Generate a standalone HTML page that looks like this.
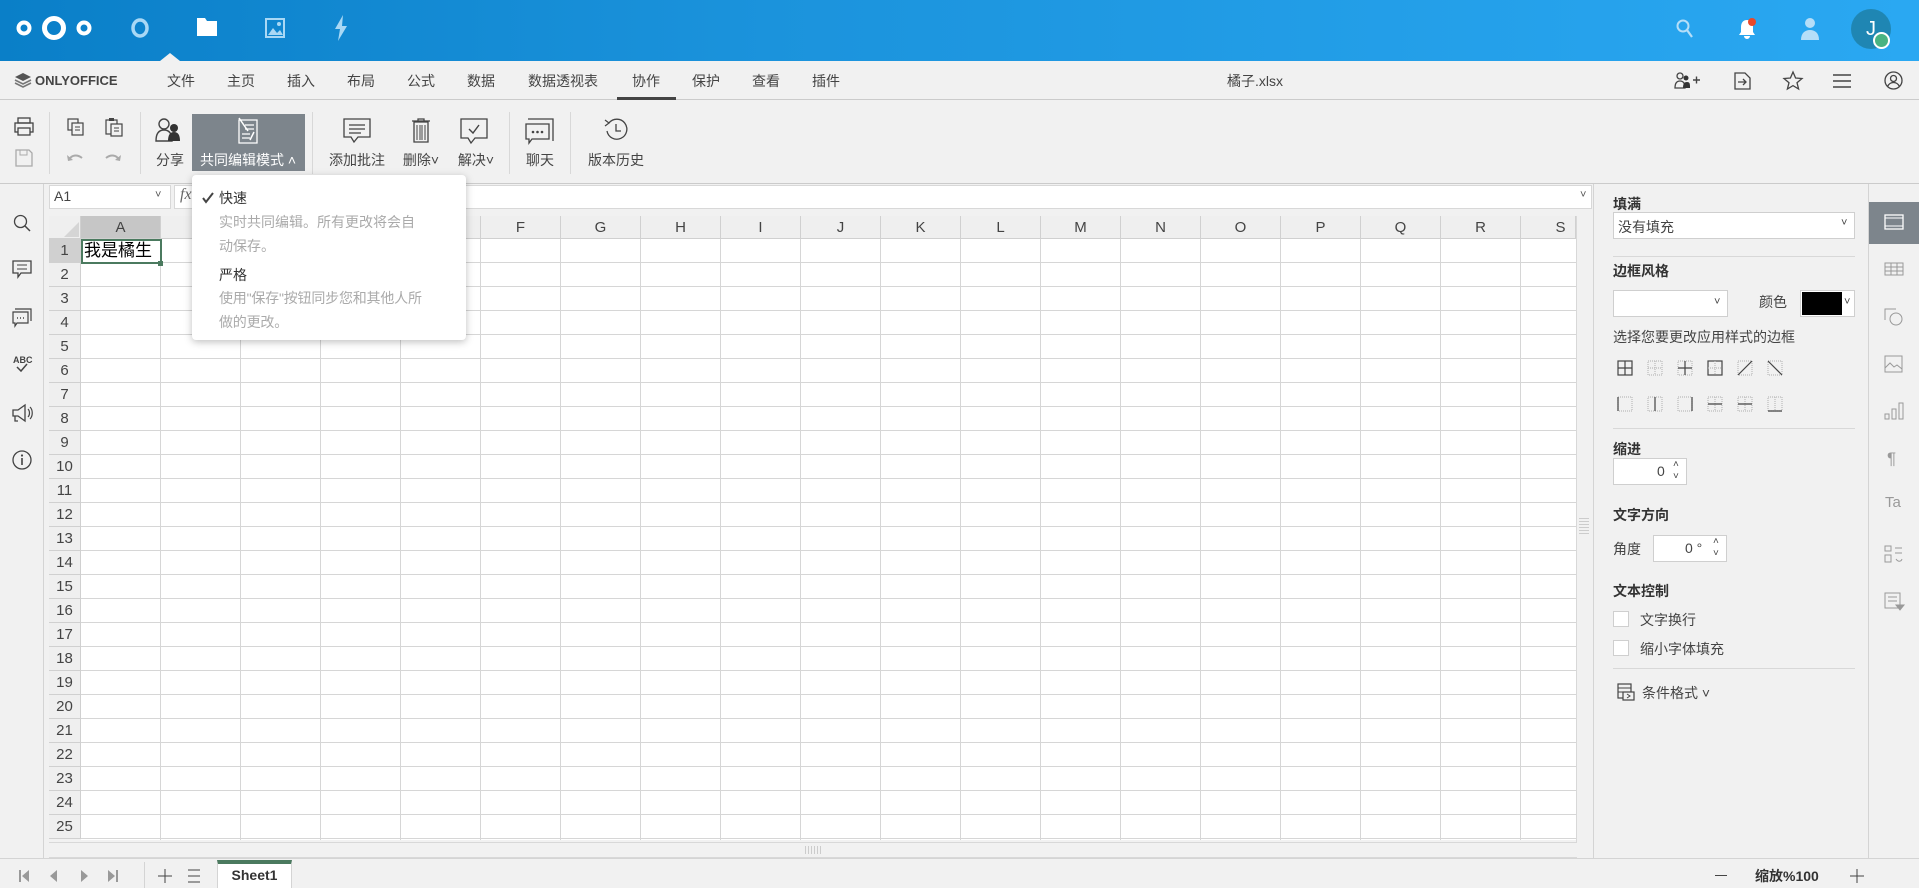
<!DOCTYPE html>
<html><head><meta charset="utf-8">
<style>
*{box-sizing:border-box;margin:0;padding:0}
body{width:1919px;height:888px;overflow:hidden;position:relative;background:#f1f1f1;font-family:"Liberation Sans","Noto Sans CJK SC",sans-serif;color:#444;font-size:14px}
.a{position:absolute}
.top{left:0;top:0;width:1919px;height:61px;background:linear-gradient(90deg,#0a7fc8 0%,#1b93dc 40%,#2aa8f2 100%)}
.menu{left:0;top:61px;width:1919px;height:39px;background:#f1f1f1;border-bottom:1px solid #cbcbcb}
.mt{top:71px;font-size:14px;color:#444;transform:translateX(-50%)}
.lbl{font-size:14px;color:#444;transform:translateX(-50%);top:150px;white-space:nowrap}
.sep{width:1px;background:#d8d8d8;top:112px;height:62px}
svg{position:absolute;overflow:visible}
.grid{left:81px;top:239px;width:1495px;height:601px;background-color:#fff;
background-image:repeating-linear-gradient(90deg,transparent 0 79px,#d6d6d6 79px 80px),repeating-linear-gradient(180deg,transparent 0 23px,#d6d6d6 23px 24px)}
.ch{top:216px;height:23px;width:80px;text-align:center;font-size:15px;line-height:23px;color:#444;background:#efefef;border-right:1px solid #d0d0d0;border-bottom:1px solid #d0d0d0}
.rh{left:49px;width:32px;height:24px;text-align:center;font-size:15px;line-height:24px;color:#444;background:#efefef;border-bottom:1px solid #d0d0d0;border-right:1px solid #d0d0d0}
.rp{font-size:14px;color:#444}
.b{font-weight:bold;color:#333}
.box{background:#fff;border:1px solid #cfcfcf}
</style></head><body>

<div class="a top"></div>
<svg style="left:16px;top:16px" width="76" height="24" viewBox="0 0 76 24">
<circle cx="8" cy="12" r="5.5" fill="none" stroke="#fff" stroke-width="4"/>
<circle cx="38" cy="12" r="9.5" fill="none" stroke="#fff" stroke-width="5"/>
<circle cx="68" cy="12" r="5.5" fill="none" stroke="#fff" stroke-width="4"/>
</svg>
<svg style="left:130px;top:17px" width="20" height="22"><ellipse cx="10" cy="11" rx="7" ry="8" fill="none" stroke="#a9d8f5" stroke-width="3.5"/></svg>
<svg style="left:197px;top:18px" width="20" height="18"><path d="M0 0h8l2 3h10v15H0z" fill="#fff"/></svg>
<svg style="left:160px;top:53px" width="20" height="8"><path d="M0 8L10 0L20 8z" fill="#f1f1f1"/></svg>
<svg style="left:265px;top:18px" width="20" height="20"><rect x="1" y="1" width="18" height="18" fill="none" stroke="#a9d8f5" stroke-width="2"/><path d="M3 17l5-7 4 5 3-3 3 5z" fill="#a9d8f5"/><circle cx="14" cy="6" r="2" fill="#a9d8f5"/></svg>
<svg style="left:334px;top:15px" width="14" height="26"><path d="M9 0L1 14h5l-2 12 9-15H8z" fill="#a9d8f5"/></svg>
<svg style="left:1676px;top:19px" width="18" height="20"><circle cx="7" cy="7" r="5.5" fill="none" stroke="#b5def8" stroke-width="2"/><path d="M11 11l5 7" stroke="#b5def8" stroke-width="2.2"/></svg>
<svg style="left:1738px;top:18px" width="20" height="22"><path d="M9 2c-4 0-6 3-6 7v5l-2 3h16l-2-3V9c0-4-2-7-6-7z M6 18h6a3 3 0 0 1-6 0z" fill="#fff"/><circle cx="14" cy="4" r="4" fill="#e9482a"/></svg>
<svg style="left:1798px;top:16px" width="22" height="26"><circle cx="12" cy="7" r="5" fill="#b5def8"/><path d="M3 24c0-7 4-10 9-10s9 3 9 10z" fill="#b5def8"/></svg>
<div class="a" style="left:1851px;top:9px;width:40px;height:40px;border-radius:50%;background:#1f86b3;color:#fff;font-size:20px;text-align:center;line-height:40px">J</div>
<div class="a" style="left:1873px;top:32px;width:17px;height:17px;border-radius:50%;background:#49b382;border:2px solid #fff"></div>

<div class="a menu"></div>
<svg style="left:15px;top:73px" width="16" height="15"><path d="M8 0l8 4-8 4-8-4z" fill="#555"/><path d="M0 7l8 4 8-4M0 10l8 4 8-4" fill="none" stroke="#777" stroke-width="1.6"/></svg>
<div class="a b" style="left:35px;top:73px;font-size:13px;color:#444">ONLYOFFICE</div>
<div class="a mt" style="left:181px">文件</div>
<div class="a mt" style="left:241px">主页</div>
<div class="a mt" style="left:301px">插入</div>
<div class="a mt" style="left:361px">布局</div>
<div class="a mt" style="left:421px">公式</div>
<div class="a mt" style="left:481px">数据</div>
<div class="a mt" style="left:563px">数据透视表</div>
<div class="a mt" style="left:646px">协作</div>
<div class="a" style="left:617px;top:97px;width:59px;height:3px;background:#444"></div>
<div class="a mt" style="left:706px">保护</div>
<div class="a mt" style="left:766px">查看</div>
<div class="a mt" style="left:826px">插件</div>
<div class="a mt" style="left:1255px">橘子.xlsx</div>
<svg style="left:1674px;top:72px" width="28" height="18"><circle cx="6" cy="4" r="3" fill="none" stroke="#444" stroke-width="1.3"/><path d="M1 16c0-5 2-7 5-7s5 2 5 7z" fill="none" stroke="#444" stroke-width="1.3"/><circle cx="12" cy="6" r="2.5" fill="#333"/><path d="M9 16c0-4 1-6 4-6s3 2 3 6z" fill="#333"/><path d="M19 8h7M22.5 4.5v7" stroke="#444" stroke-width="1.4"/></svg>
<svg style="left:1734px;top:72px" width="18" height="18"><path d="M1 1h10l5 5v11H1z" fill="none" stroke="#444" stroke-width="1.3"/><path d="M4 10h8M9 7l3 3-3 3" fill="none" stroke="#444" stroke-width="1.3"/></svg>
<svg style="left:1783px;top:71px" width="20" height="19"><path d="M10 1l2.6 6 6.4.5-5 4.2 1.6 6.3L10 14.6 4.4 18l1.6-6.3-5-4.2 6.4-.5z" fill="none" stroke="#444" stroke-width="1.3"/></svg>
<svg style="left:1833px;top:74px" width="18" height="14"><path d="M0 1h18M0 7h18M0 13h18" stroke="#444" stroke-width="1.4"/></svg>
<svg style="left:1884px;top:71px" width="19" height="19"><circle cx="9.5" cy="9.5" r="8.5" fill="none" stroke="#444" stroke-width="1.3"/><circle cx="9.5" cy="7.5" r="3" fill="none" stroke="#444" stroke-width="1.3"/><path d="M3.5 15.5c1.5-3 3.5-4 6-4s4.5 1 6 4" fill="none" stroke="#444" stroke-width="1.3"/></svg>

<div class="a" style="left:0;top:183px;width:1919px;height:1px;background:#cbcbcb"></div>
<svg style="left:14px;top:117px" width="20" height="20"><rect x="4" y="1" width="12" height="5" fill="none" stroke="#444" stroke-width="1.3"/><rect x="1" y="6" width="18" height="9" fill="none" stroke="#444" stroke-width="1.3"/><rect x="4" y="11" width="12" height="7" fill="#f1f1f1" stroke="#444" stroke-width="1.3"/></svg>
<svg style="left:15px;top:149px" width="18" height="18"><path d="M1 1h13l3 3v13H1z" fill="none" stroke="#aaa" stroke-width="1.3"/><rect x="5" y="1" width="7" height="5" fill="none" stroke="#aaa"/></svg>
<div class="a sep" style="left:49px"></div>
<svg style="left:67px;top:118px" width="18" height="18"><rect x="1" y="1" width="10" height="11" fill="none" stroke="#444" stroke-width="1.2"/><rect x="5" y="5" width="11" height="12" fill="#f1f1f1" stroke="#444" stroke-width="1.2"/><path d="M8 9h5M8 12h5" stroke="#444"/></svg>
<svg style="left:105px;top:117px" width="18" height="20"><rect x="1" y="3" width="11" height="14" fill="none" stroke="#444" stroke-width="1.2"/><rect x="4" y="1" width="5" height="3" fill="#444"/><rect x="6" y="7" width="11" height="12" fill="#f1f1f1" stroke="#444" stroke-width="1.2"/><path d="M9 11h5M9 14h5" stroke="#444"/></svg>
<svg style="left:67px;top:152px" width="16" height="10"><path d="M2 8c2-5 8-6 13-2" fill="none" stroke="#aaa" stroke-width="2"/><path d="M0 3l1 6 5-1z" fill="#aaa"/></svg>
<svg style="left:105px;top:152px" width="16" height="10"><path d="M14 8c-2-5-8-6-13-2" fill="none" stroke="#aaa" stroke-width="2"/><path d="M16 3l-1 6-5-1z" fill="#aaa"/></svg>
<div class="a sep" style="left:140px"></div>
<svg style="left:155px;top:118px" width="28" height="24"><circle cx="9" cy="6" r="5" fill="none" stroke="#444" stroke-width="1.4"/><path d="M1 23c0-8 3-11 8-11s8 3 8 11z" fill="none" stroke="#444" stroke-width="1.4"/><circle cx="19" cy="10" r="4" fill="#333"/><path d="M13 23c0-6 2-9 6-9s6 3 6 9z" fill="#333"/></svg>
<div class="a lbl" style="left:170px">分享</div>
<div class="a" style="left:192px;top:114px;width:113px;height:57px;background:#7d858c"></div>
<svg style="left:236px;top:117px" width="24" height="28"><path d="M3 3h18v23H3z" fill="none" stroke="#fff" stroke-width="1.3"/><path d="M9 8h9M9 12h9M6 17h8M6 21h8" stroke="#fff" stroke-width="1.2"/><path d="M3 1l9 13M18 15l-4 8" stroke="#fff" stroke-width="1.5"/></svg>
<div class="a lbl" style="left:248px;color:#fff">共同编辑模式 ˄</div>
<div class="a sep" style="left:312px"></div>
<svg style="left:343px;top:118px" width="28" height="26"><path d="M1 1h26v18H15l-4 5-3-5H1z" fill="none" stroke="#444" stroke-width="1.3"/><path d="M6 7h16M6 11h16M6 15h12" stroke="#444" stroke-width="1.2"/></svg>
<div class="a lbl" style="left:357px">添加批注</div>
<svg style="left:412px;top:118px" width="18" height="25"><path d="M0 3h18M6 3V1h6v2M2 4h14v20H2z" fill="none" stroke="#444" stroke-width="1.3"/><path d="M5 7v15M8 7v15M10 7v15M13 7v15" stroke="#444"/></svg>
<div class="a lbl" style="left:421px">删除˅</div>
<svg style="left:460px;top:118px" width="28" height="26"><path d="M1 1h26v19H15l-4 5-3-5H1z" fill="none" stroke="#444" stroke-width="1.3"/><path d="M9 11l4 4 6-8" fill="none" stroke="#444" stroke-width="1.4"/></svg>
<div class="a lbl" style="left:476px">解决˅</div>
<div class="a sep" style="left:509px"></div>
<svg style="left:525px;top:118px" width="30" height="26"><path d="M3 1h25v22" fill="none" stroke="#444" stroke-width="1.3"/><path d="M1 6h23v15H7l-3 4v-4H1z" fill="#f1f1f1" stroke="#444" stroke-width="1.3"/><circle cx="8" cy="14" r="1.3" fill="#444"/><circle cx="12.5" cy="14" r="1.3" fill="#444"/><circle cx="17" cy="14" r="1.3" fill="#444"/></svg>
<div class="a lbl" style="left:540px">聊天</div>
<div class="a sep" style="left:570px"></div>
<svg style="left:604px;top:118px" width="24" height="24"><path d="M5 5a10 10 0 1 1-2 8" fill="none" stroke="#444" stroke-width="1.3"/><path d="M1 2l4 3-4 3" fill="none" stroke="#444" stroke-width="1.2"/><path d="M12 6v7h5" fill="none" stroke="#444" stroke-width="1.3"/></svg>
<div class="a lbl" style="left:616px">版本历史</div>

<div class="a" style="left:0;top:184px;width:44px;height:676px;background:#f1f1f1;border-right:1px solid #d4d4d4"></div>
<svg style="left:13px;top:214px" width="18" height="18"><circle cx="7.5" cy="7.5" r="6" fill="none" stroke="#444" stroke-width="1.3"/><path d="M12 12l5 5" stroke="#444" stroke-width="1.5"/></svg>
<svg style="left:12px;top:260px" width="20" height="18"><path d="M1 1h18v12H9l-3 4v-4H1z" fill="none" stroke="#444" stroke-width="1.3"/><path d="M5 5h10M5 9h10" stroke="#444"/></svg>
<svg style="left:12px;top:308px" width="20" height="18"><path d="M3 1h16v12" fill="none" stroke="#444" stroke-width="1.2"/><path d="M1 4h15v11H5l-2 3v-3H1z" fill="#f1f1f1" stroke="#444" stroke-width="1.2"/><path d="M5 10h1M8 10h1M11 10h1" stroke="#444" stroke-width="1.5"/></svg>
<div class="a" style="left:13px;top:355px;font-size:9px;color:#444;font-weight:bold">ABC</div>
<svg style="left:16px;top:364px" width="12" height="9"><path d="M1 3l4 4 6-7" fill="none" stroke="#444" stroke-width="1.5"/></svg>
<svg style="left:12px;top:404px" width="22" height="18"><path d="M1 6h5l7-5v16l-7-5H1z M3 12v5h3" fill="none" stroke="#444" stroke-width="1.3"/><path d="M16 5c2 2 2 6 0 8M18 3c3 3 3 9 0 12" fill="none" stroke="#444" stroke-width="1.2"/></svg>
<svg style="left:12px;top:450px" width="20" height="20"><circle cx="10" cy="10" r="9" fill="none" stroke="#444" stroke-width="1.3"/><path d="M10 8v7" stroke="#444" stroke-width="1.6"/><circle cx="10" cy="5.5" r="1.1" fill="#444"/></svg>

<div class="a box" style="left:49px;top:185px;width:122px;height:24px;border-color:#d8d8d8"></div>
<div class="a" style="left:54px;top:188px;font-size:14px;color:#444">A1</div>
<div class="a" style="left:155px;top:189px;font-size:11px;color:#555">˅</div>
<div class="a box" style="left:174px;top:185px;width:1418px;height:24px;border-color:#d8d8d8"></div>
<div class="a" style="left:180px;top:186px;font-size:16px;font-style:italic;font-family:'Liberation Serif',serif;color:#666">fx</div>
<div class="a" style="left:1580px;top:189px;font-size:11px;color:#555">˅</div>

<div class="a" style="left:49px;top:216px;width:32px;height:23px;background:#efefef;border-right:1px solid #d0d0d0;border-bottom:1px solid #d0d0d0"></div>
<svg style="left:64px;top:222px" width="15" height="15"><path d="M15 0v15H0z" fill="#d5d5d5"/></svg>
<div class="a ch" style="left:81px;background:#c6c6c6">A</div>
<div class="a ch" style="left:161px">B</div><div class="a ch" style="left:241px">C</div><div class="a ch" style="left:321px">D</div><div class="a ch" style="left:401px">E</div>
<div class="a ch" style="left:481px">F</div><div class="a ch" style="left:561px">G</div><div class="a ch" style="left:641px">H</div><div class="a ch" style="left:721px">I</div>
<div class="a ch" style="left:801px">J</div><div class="a ch" style="left:881px">K</div><div class="a ch" style="left:961px">L</div><div class="a ch" style="left:1041px">M</div>
<div class="a ch" style="left:1121px">N</div><div class="a ch" style="left:1201px">O</div><div class="a ch" style="left:1281px">P</div><div class="a ch" style="left:1361px">Q</div>
<div class="a ch" style="left:1441px">R</div><div class="a ch" style="left:1521px;width:55px;text-indent:25px">S</div>
<div class="a grid"></div>
<div class="a rh" style="top:239px;background:#d0d0d0">1</div><div class="a rh" style="top:263px">2</div><div class="a rh" style="top:287px">3</div><div class="a rh" style="top:311px">4</div><div class="a rh" style="top:335px">5</div>
<div class="a rh" style="top:359px">6</div><div class="a rh" style="top:383px">7</div><div class="a rh" style="top:407px">8</div><div class="a rh" style="top:431px">9</div><div class="a rh" style="top:455px">10</div>
<div class="a rh" style="top:479px">11</div><div class="a rh" style="top:503px">12</div><div class="a rh" style="top:527px">13</div><div class="a rh" style="top:551px">14</div><div class="a rh" style="top:575px">15</div>
<div class="a rh" style="top:599px">16</div><div class="a rh" style="top:623px">17</div><div class="a rh" style="top:647px">18</div><div class="a rh" style="top:671px">19</div><div class="a rh" style="top:695px">20</div>
<div class="a rh" style="top:719px">21</div><div class="a rh" style="top:743px">22</div><div class="a rh" style="top:767px">23</div><div class="a rh" style="top:791px">24</div><div class="a rh" style="top:815px">25</div>
<div class="a" style="left:81px;top:239px;width:81px;height:25px;border:2px solid #4b7a5f"></div>
<div class="a" style="left:158px;top:261px;width:5px;height:5px;background:#4b7a5f"></div>
<div class="a" style="left:84px;top:240px;font-size:17px;color:#000;line-height:22px">我是橘生</div>

<div class="a" style="left:1576px;top:216px;width:17px;height:627px;background:#f1f1f1;border-left:1px solid #d8d8d8"></div>
<div class="a" style="left:1579px;top:518px;width:10px;height:18px;background:repeating-linear-gradient(180deg,#ccc 0 1px,transparent 1px 3px)"></div>
<div class="a" style="left:49px;top:842px;width:1528px;height:16px;background:#f1f1f1;border-top:1px solid #d8d8d8;border-bottom:1px solid #d8d8d8"></div>
<div class="a" style="left:805px;top:846px;width:18px;height:8px;background:repeating-linear-gradient(90deg,#ccc 0 1px,transparent 1px 3px)"></div>

<div class="a" style="left:192px;top:175px;width:274px;height:165px;background:#fff;border-radius:4px;box-shadow:0 2px 8px rgba(0,0,0,.25)"></div>
<svg style="left:202px;top:192px" width="12" height="11"><path d="M1 6l3 4 7-9" fill="none" stroke="#444" stroke-width="2"/></svg>
<div class="a" style="left:219px;top:188px;font-size:14px;color:#333">快速</div>
<div class="a" style="left:219px;top:210px;font-size:14px;color:#aaa;line-height:24px;width:200px">实时共同编辑。所有更改将会自动保存。</div>
<div class="a" style="left:219px;top:265px;font-size:14px;color:#333">严格</div>
<div class="a" style="left:219px;top:286px;font-size:14px;color:#aaa;line-height:24px;width:214px;letter-spacing:-0.2px">使用"保存"按钮同步您和其他人所做的更改。</div>

<div class="a" style="left:1593px;top:184px;width:1px;height:676px;background:#d4d4d4"></div>
<div class="a" style="left:1868px;top:184px;width:1px;height:676px;background:#d4d4d4"></div>
<div class="a rp b" style="left:1613px;top:194px">填满</div>
<div class="a box" style="left:1613px;top:212px;width:242px;height:27px"></div>
<div class="a rp" style="left:1618px;top:217px">没有填充</div>
<div class="a" style="left:1841px;top:217px;font-size:11px">˅</div>
<div class="a" style="left:1613px;top:256px;width:242px;height:1px;background:#d8d8d8"></div>
<div class="a rp b" style="left:1613px;top:261px">边框风格</div>
<div class="a box" style="left:1613px;top:290px;width:115px;height:27px"></div>
<div class="a" style="left:1714px;top:296px;font-size:11px">˅</div>
<div class="a rp" style="left:1759px;top:292px">颜色</div>
<div class="a box" style="left:1800px;top:290px;width:55px;height:27px"></div>
<div class="a" style="left:1802px;top:292px;width:40px;height:23px;background:#000"></div>
<div class="a" style="left:1844px;top:296px;font-size:11px">˅</div>
<div class="a rp" style="left:1613px;top:327px">选择您要更改应用样式的边框</div>
<svg style="left:1617px;top:360px" width="180" height="56" fill="none" stroke-width="1.2">
<g stroke="#444"><rect x="1" y="1" width="14" height="14"/><path d="M8 1v14M1 8h14"/></g>
<g stroke="#bbb" stroke-dasharray="1 1"><rect x="31" y="1" width="14" height="14"/><path d="M38 1v14M31 8h14"/></g>
<g><rect x="61" y="1" width="14" height="14" stroke="#bbb" stroke-dasharray="1 1"/><path d="M68 1v14M61 8h14" stroke="#444"/></g>
<g><rect x="91" y="1" width="14" height="14" stroke="#444"/><path d="M98 1v14M91 8h14" stroke="#bbb" stroke-dasharray="1 1"/></g>
<g><rect x="121" y="1" width="14" height="14" stroke="#bbb" stroke-dasharray="1 1"/><path d="M121 15L135 1" stroke="#444"/></g>
<g><rect x="151" y="1" width="14" height="14" stroke="#bbb" stroke-dasharray="1 1"/><path d="M151 1L165 15" stroke="#444"/></g>
<g stroke="#bbb" stroke-dasharray="1 1"><rect x="1" y="37" width="14" height="14"/><rect x="31" y="37" width="14" height="14"/><rect x="61" y="37" width="14" height="14"/><rect x="91" y="37" width="14" height="14"/><rect x="121" y="37" width="14" height="14"/><rect x="151" y="37" width="14" height="14"/><path d="M98 37v14M128 37v14M158 37v14"/></g>
<path d="M1 37v14M38 37v14M75 37v14M91 44h14M121 44h14M151 51h14" stroke="#444"/>
</svg>
<div class="a" style="left:1613px;top:428px;width:242px;height:1px;background:#d8d8d8"></div>
<div class="a rp b" style="left:1613px;top:439px">缩进</div>
<div class="a box" style="left:1613px;top:458px;width:74px;height:27px"></div>
<div class="a rp" style="left:1657px;top:463px">0</div>
<div class="a" style="left:1673px;top:459px;font-size:10px;line-height:12px">˄<br>˅</div>
<div class="a rp b" style="left:1613px;top:505px">文字方向</div>
<div class="a rp" style="left:1613px;top:539px">角度</div>
<div class="a box" style="left:1653px;top:535px;width:74px;height:27px"></div>
<div class="a rp" style="left:1685px;top:540px">0 °</div>
<div class="a" style="left:1713px;top:536px;font-size:10px;line-height:12px">˄<br>˅</div>
<div class="a rp b" style="left:1613px;top:581px">文本控制</div>
<div class="a box" style="left:1613px;top:611px;width:16px;height:16px"></div>
<div class="a rp" style="left:1640px;top:610px">文字换行</div>
<div class="a box" style="left:1613px;top:640px;width:16px;height:16px"></div>
<div class="a rp" style="left:1640px;top:639px">缩小字体填充</div>
<div class="a" style="left:1613px;top:668px;width:242px;height:1px;background:#d8d8d8"></div>
<svg style="left:1617px;top:683px" width="18" height="18"><rect x="1" y="1" width="13" height="14" fill="none" stroke="#444" stroke-width="1.2"/><path d="M1 5h13M1 9h6" stroke="#444"/><rect x="6" y="9" width="11" height="8" fill="#f1f1f1" stroke="#444" stroke-width="1.2"/><path d="M10 11l3 2-3 2" fill="none" stroke="#444"/></svg>
<div class="a rp" style="left:1642px;top:683px">条件格式 ˅</div>

<div class="a" style="left:1869px;top:202px;width:50px;height:42px;background:#7d858c"></div>
<svg style="left:1884px;top:214px" width="20" height="16"><rect x="1" y="1" width="18" height="14" fill="none" stroke="#fff" stroke-width="1.3"/><path d="M1 4h18M1 12h18" stroke="#fff"/></svg>
<svg style="left:1884px;top:262px" width="20" height="14" stroke="#999" fill="none"><rect x="1" y="1" width="18" height="12"/><path d="M1 5h18M1 9h18M7 1v12M13 1v12"/></svg>
<svg style="left:1884px;top:308px" width="20" height="18" stroke="#999" fill="none"><path d="M1 12V1h11"/><circle cx="12" cy="11" r="6"/></svg>
<svg style="left:1884px;top:355px" width="20" height="18" stroke="#999" fill="none"><rect x="1" y="1" width="17" height="16"/><path d="M1 13l5-5 4 4 3-2 5 4"/></svg>
<svg style="left:1884px;top:402px" width="20" height="18" stroke="#999" fill="none"><rect x="1" y="12" width="4" height="5"/><rect x="8" y="7" width="4" height="10"/><rect x="15" y="1" width="4" height="16"/></svg>
<div class="a" style="left:1887px;top:449px;font-size:17px;color:#999">¶</div>
<div class="a" style="left:1885px;top:494px;font-size:15px;color:#999">Ta</div>
<svg style="left:1884px;top:545px" width="20" height="18" stroke="#999" fill="none"><rect x="1" y="1" width="6" height="5"/><rect x="1" y="10" width="6" height="7"/><path d="M11 3h7M11 8h7M12 14c2 3 5 3 6 0"/></svg>
<svg style="left:1884px;top:592px" width="20" height="20" stroke="#999" fill="none"><rect x="1" y="1" width="15" height="15"/><path d="M4 5h9M4 9h9"/><path d="M12 13h8l-4 5z" fill="#999"/></svg>

<div class="a" style="left:0;top:858px;width:1919px;height:30px;background:#f1f1f1;border-top:1px solid #d4d4d4"></div>
<svg style="left:19px;top:870px" width="110" height="12" fill="#999"><path d="M0 0h2v12H0zM10 0v12L3 6z"/><path d="M38 0v12L31 6z"/><path d="M62 0v12l7-6z"/><path d="M89 0v12l7-6zM97 0h2v12h-2z"/></svg>
<div class="a" style="left:144px;top:862px;width:1px;height:26px;background:#d4d4d4"></div>
<svg style="left:158px;top:869px" width="46" height="14" stroke="#444" fill="none"><path d="M7 0v14M0 7h14"/><path d="M30 1h12M30 7h12M30 13h12"/></svg>
<div class="a" style="left:217px;top:860px;width:75px;height:28px;background:#fff;border-top:4px solid #4b7a5f;border-left:1px solid #d4d4d4;border-right:1px solid #d4d4d4;text-align:center;font-size:14px;font-weight:bold;color:#333;line-height:22px">Sheet1</div>
<div class="a" style="left:1715px;top:875px;width:12px;height:1px;background:#444"></div>
<div class="a" style="left:1755px;top:866px;font-size:14px;color:#333;font-weight:bold">缩放%100</div>
<svg style="left:1850px;top:869px" width="14" height="14" stroke="#444"><path d="M7 0v14M0 7h14"/></svg>
</body></html>
